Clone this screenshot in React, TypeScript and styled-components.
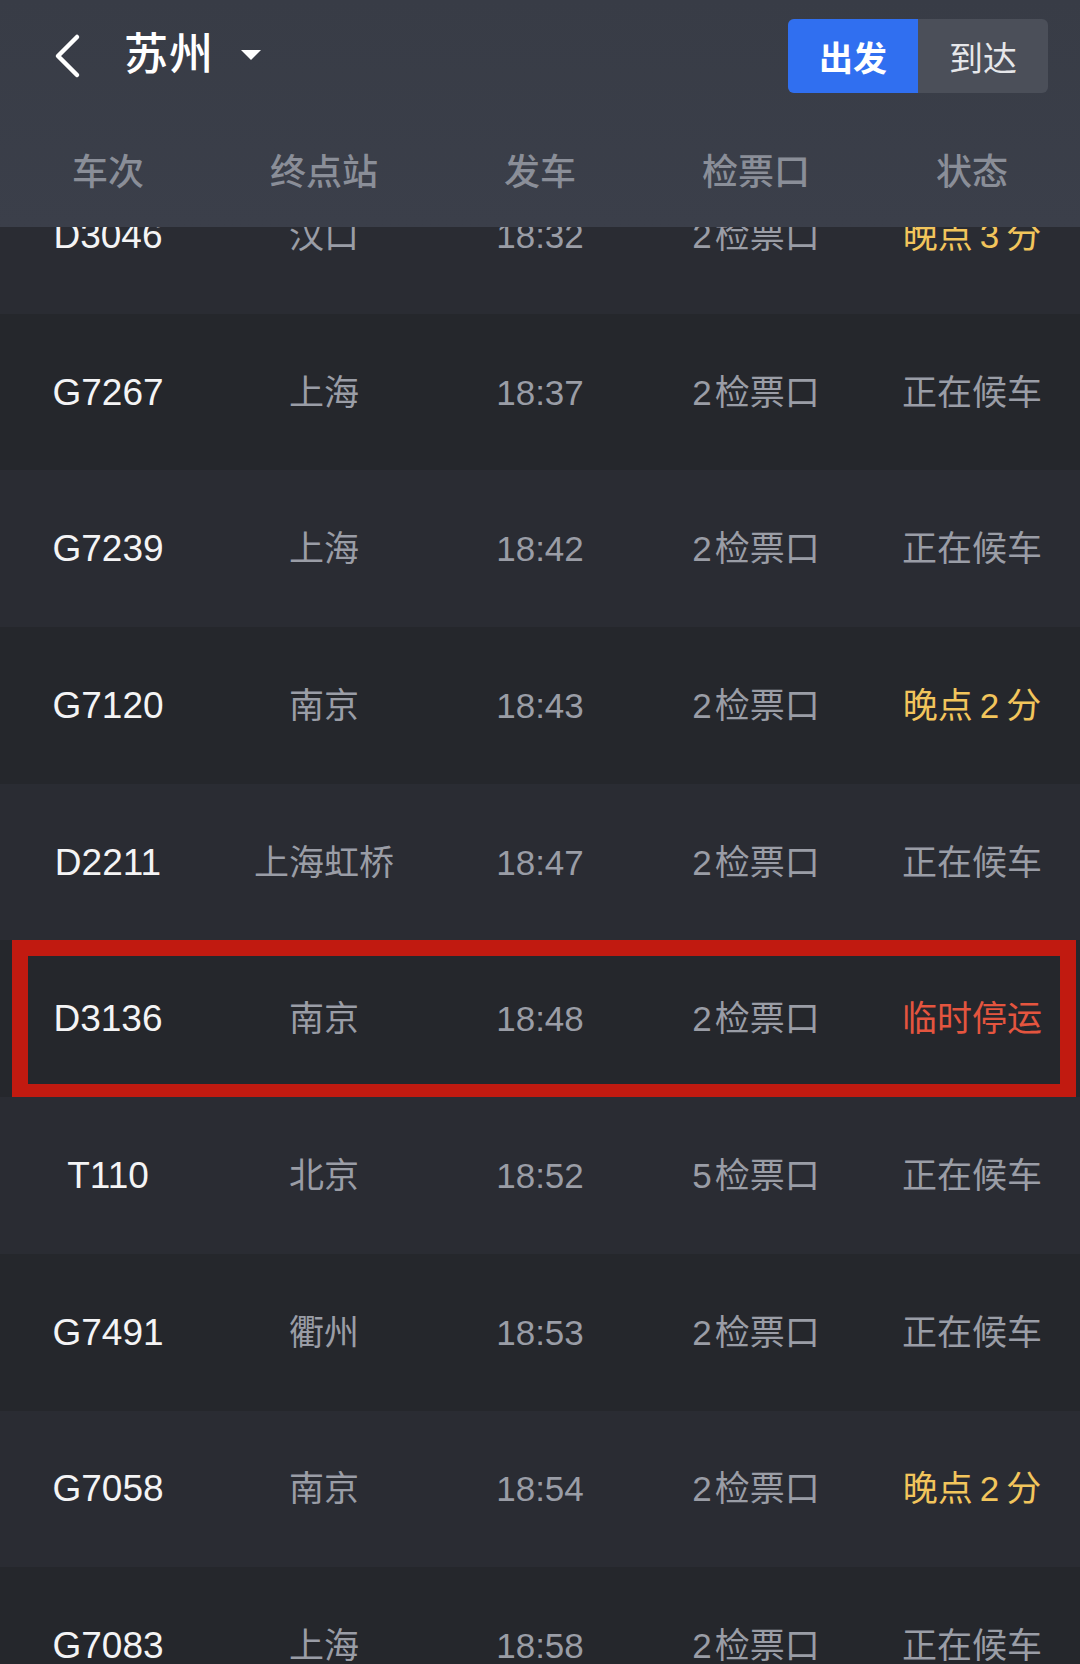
import React from "react";
import styled, { createGlobalStyle, css } from "styled-components";

type Tone = "normal" | "late" | "stopped";

interface Train {
    no: string
    dest: string
    time: string
    gate: string
    status: string
    tone: Tone
    highlighted?: boolean
}

// the station board spaces digits out a little from the CJK around them
const gate = (n: number) => `${n}\u200A检票口`
const late = (m: number) => `晚点\u2009${m}\u2009分`

const trains: Train[] = [
    { no: "D3046", dest: "汉口", time: "18:32", gate: gate(2), status: late(3), tone: "late" },
    { no: "G7267", dest: "上海", time: "18:37", gate: gate(2), status: "正在候车", tone: "normal" },
    { no: "G7239", dest: "上海", time: "18:42", gate: gate(2), status: "正在候车", tone: "normal" },
    { no: "G7120", dest: "南京", time: "18:43", gate: gate(2), status: late(2), tone: "late" },
    { no: "D2211", dest: "上海虹桥", time: "18:47", gate: gate(2), status: "正在候车", tone: "normal" },
    { no: "D3136", dest: "南京", time: "18:48", gate: gate(2), status: "临时停运", tone: "stopped", highlighted: true },
    { no: "T110", dest: "北京", time: "18:52", gate: gate(5), status: "正在候车", tone: "normal" },
    { no: "G7491", dest: "衢州", time: "18:53", gate: gate(2), status: "正在候车", tone: "normal" },
    { no: "G7058", dest: "南京", time: "18:54", gate: gate(2), status: late(2), tone: "late" },
    { no: "G7083", dest: "上海", time: "18:58", gate: gate(2), status: "正在候车", tone: "normal" },
]

const columns = ["车次", "终点站", "发车", "检票口", "状态"]

export default function App () {
    return (
        <>
            <GlobalStyle />
            <Page>
                <Header>
                    <TopBar>
                        <BackIcon width="30" height="46" viewBox="0 0 30 46">
                            <path d="M25 4 L6 23 L25 42" fill="none" stroke="#fff" strokeWidth="4.5" strokeLinecap="round" strokeLinejoin="round" />
                        </BackIcon>
                        <City>苏州</City>
                        <Caret width="22" height="12" viewBox="0 0 22 12">
                            <path d="M1 1 L21 1 L11 11 Z" fill="#fff" />
                        </Caret>
                        <Toggle>
                            <ToggleButton active>出发</ToggleButton>
                            <ToggleButton>到达</ToggleButton>
                        </Toggle>
                    </TopBar>
                    <ColumnRow>
                        {columns.map(c => <ColumnLabel key={c}>{c}</ColumnLabel>)}
                    </ColumnRow>
                </Header>
                <List>
                    {trains.map((t, i) => (
                        <Row key={t.no} dark={i % 2 === 1} highlighted={!!t.highlighted}>
                            <TrainNo>{t.no}</TrainNo>
                            <Cell>{t.dest}</Cell>
                            <Cell>{t.time}</Cell>
                            <Cell>{t.gate}</Cell>
                            <Status tone={t.tone}>{t.status}</Status>
                        </Row>
                    ))}
                </List>
            </Page>
        </>
    )
}

const GlobalStyle = createGlobalStyle`
    html, body {
        margin: 0;
        padding: 0;
        background: #26282e;
    }
    * {
        box-sizing: border-box;
    }
`

const Page = styled.div`
    width: 1080px;
    height: 1664px;
    overflow: hidden;
    background: #26282e;
    font-family: "Liberation Sans", "Noto Sans CJK SC", sans-serif;
`

const Header = styled.header`
    position: relative;
    z-index: 2;
    height: 227px;
    background: linear-gradient(#383c46, #3b3f4a);
    display: flex;
    flex-direction: column;
`

const TopBar = styled.div`
    height: 110px;
    display: flex;
    align-items: center;
    padding: 0 32px 0 52px;
`

const BackIcon = styled.svg`
    display: block;
    margin-top: 2px;
`

const City = styled.h1`
    margin: 0 0 0 42px;
    color: #fff;
    font-size: 44px;
    font-weight: 500;
    line-height: 1;
    letter-spacing: 1px;
`

const Caret = styled.svg`
    display: block;
    margin-left: 26px;
`

const Toggle = styled.div`
    margin-left: auto;
    margin-top: 2px;
    display: flex;
    height: 74px;
    border-radius: 6px;
    overflow: hidden;
    background: #4b4f59;
`

const ToggleButton = styled.div<{ active?: boolean }>`
    width: 130px;
    display: flex;
    align-items: center;
    justify-content: center;
    font-size: 34px;
    color: ${p => p.active ? "#fff" : "#e6e7ea"};
    font-weight: ${p => p.active ? 600 : 400};
    background: ${p => p.active ? "#306ff0" : "transparent"};
`

const ColumnRow = styled.div`
    flex: 1;
    display: grid;
    grid-template-columns: repeat(5, 1fr);
    align-items: center;
`

const ColumnLabel = styled.div`
    text-align: center;
    color: #8a8e98;
    font-size: 36px;
    font-weight: 500;
`

const List = styled.div`
    margin-top: -70px;
`

const Row = styled.div<{ dark: boolean; highlighted: boolean }>`
    position: relative;
    height: 156.7px;
    display: grid;
    grid-template-columns: repeat(5, 1fr);
    align-items: center;
    background: ${p => p.dark ? "#25272c" : "#2a2c33"};

    ${p => p.highlighted && css`
        &::after {
            content: "";
            position: absolute;
            left: 12px;
            right: 4px;
            top: 0;
            bottom: -3px;
            border: 16px solid #c11a10;
            pointer-events: none;
        }
    `}
`

const Cell = styled.div`
    text-align: center;
    color: #9a9da6;
    font-size: 35px;
    line-height: 1;
    white-space: nowrap;
`

const TrainNo = styled(Cell)`
    color: #f4f4f5;
    font-size: 37px;
`

const toneColor: Record<Tone, string> = {
    normal: "#9a9da6",
    late: "#f2c55c",
    stopped: "#e4553f",
}

const Status = styled(Cell)<{ tone: Tone }>`
    color: ${p => toneColor[p.tone]};
`
